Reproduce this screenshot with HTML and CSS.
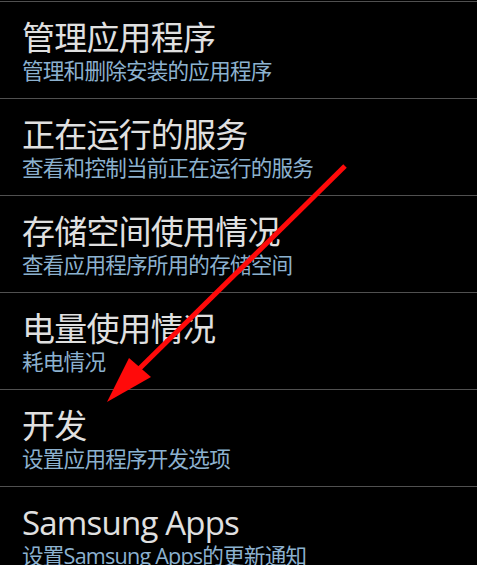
FILE: index.html
```html
<!DOCTYPE html>
<html lang="zh-CN">
<head>
    <meta charset="UTF-8">
    <meta name="viewport" content="width=device-width, initial-scale=1.0">
    <title>应用程序设置</title>
    <link rel="stylesheet" href="styles.css">
</head>
<body>
    <ul class="settings">
        <li class="item">
            <div class="title">管理应用程序</div>
            <div class="summary">管理和删除安装的应用程序</div>
        </li>
        <li class="item">
            <div class="title">正在运行的服务</div>
            <div class="summary">查看和控制当前正在运行的服务</div>
        </li>
        <li class="item">
            <div class="title">存储空间使用情况</div>
            <div class="summary">查看应用程序所用的存储空间</div>
        </li>
        <li class="item">
            <div class="title">电量使用情况</div>
            <div class="summary">耗电情况</div>
        </li>
        <li class="item">
            <div class="title">开发</div>
            <div class="summary">设置应用程序开发选项</div>
        </li>
        <li class="item">
            <div class="title">Samsung Apps</div>
            <div class="summary">设置Samsung Apps的更新通知</div>
        </li>
    </ul>

    <!-- annotation arrow pointing at 开发 -->
    <svg class="arrow" width="477" height="565" viewBox="0 0 477 565">
        <line x1="345" y1="166" x2="138" y2="370" stroke="#ff0a0a" stroke-width="5" stroke-linecap="butt"/>
        <polygon points="107,402 129,358 151,377" fill="#ff0a0a"/>
    </svg>
</body>
</html>
```

FILE: styles.css
```css
body {
    margin: 0;
    padding: 0;
    background: #000;
    font-family: "Open Sans", "Noto Sans CJK SC", sans-serif;
    overflow: hidden;
}

.settings {
    list-style: none;
    margin: 1px 0 0 0;
    padding: 0;
}

.item {
    border-top: 1px solid #505050;
    height: 97px;
    padding: 16px 22px 0 22px;
    box-sizing: border-box;
}

.title {
    font-size: 33px;
    line-height: 39px;
    letter-spacing: -0.8px;
    color: #e0e0e0;
}

.summary {
    font-size: 21.6px;
    line-height: 27px;
    letter-spacing: -0.8px;
    color: #8cb1cf;
}

.arrow {
    position: absolute;
    top: 0;
    left: 0;
}
```
